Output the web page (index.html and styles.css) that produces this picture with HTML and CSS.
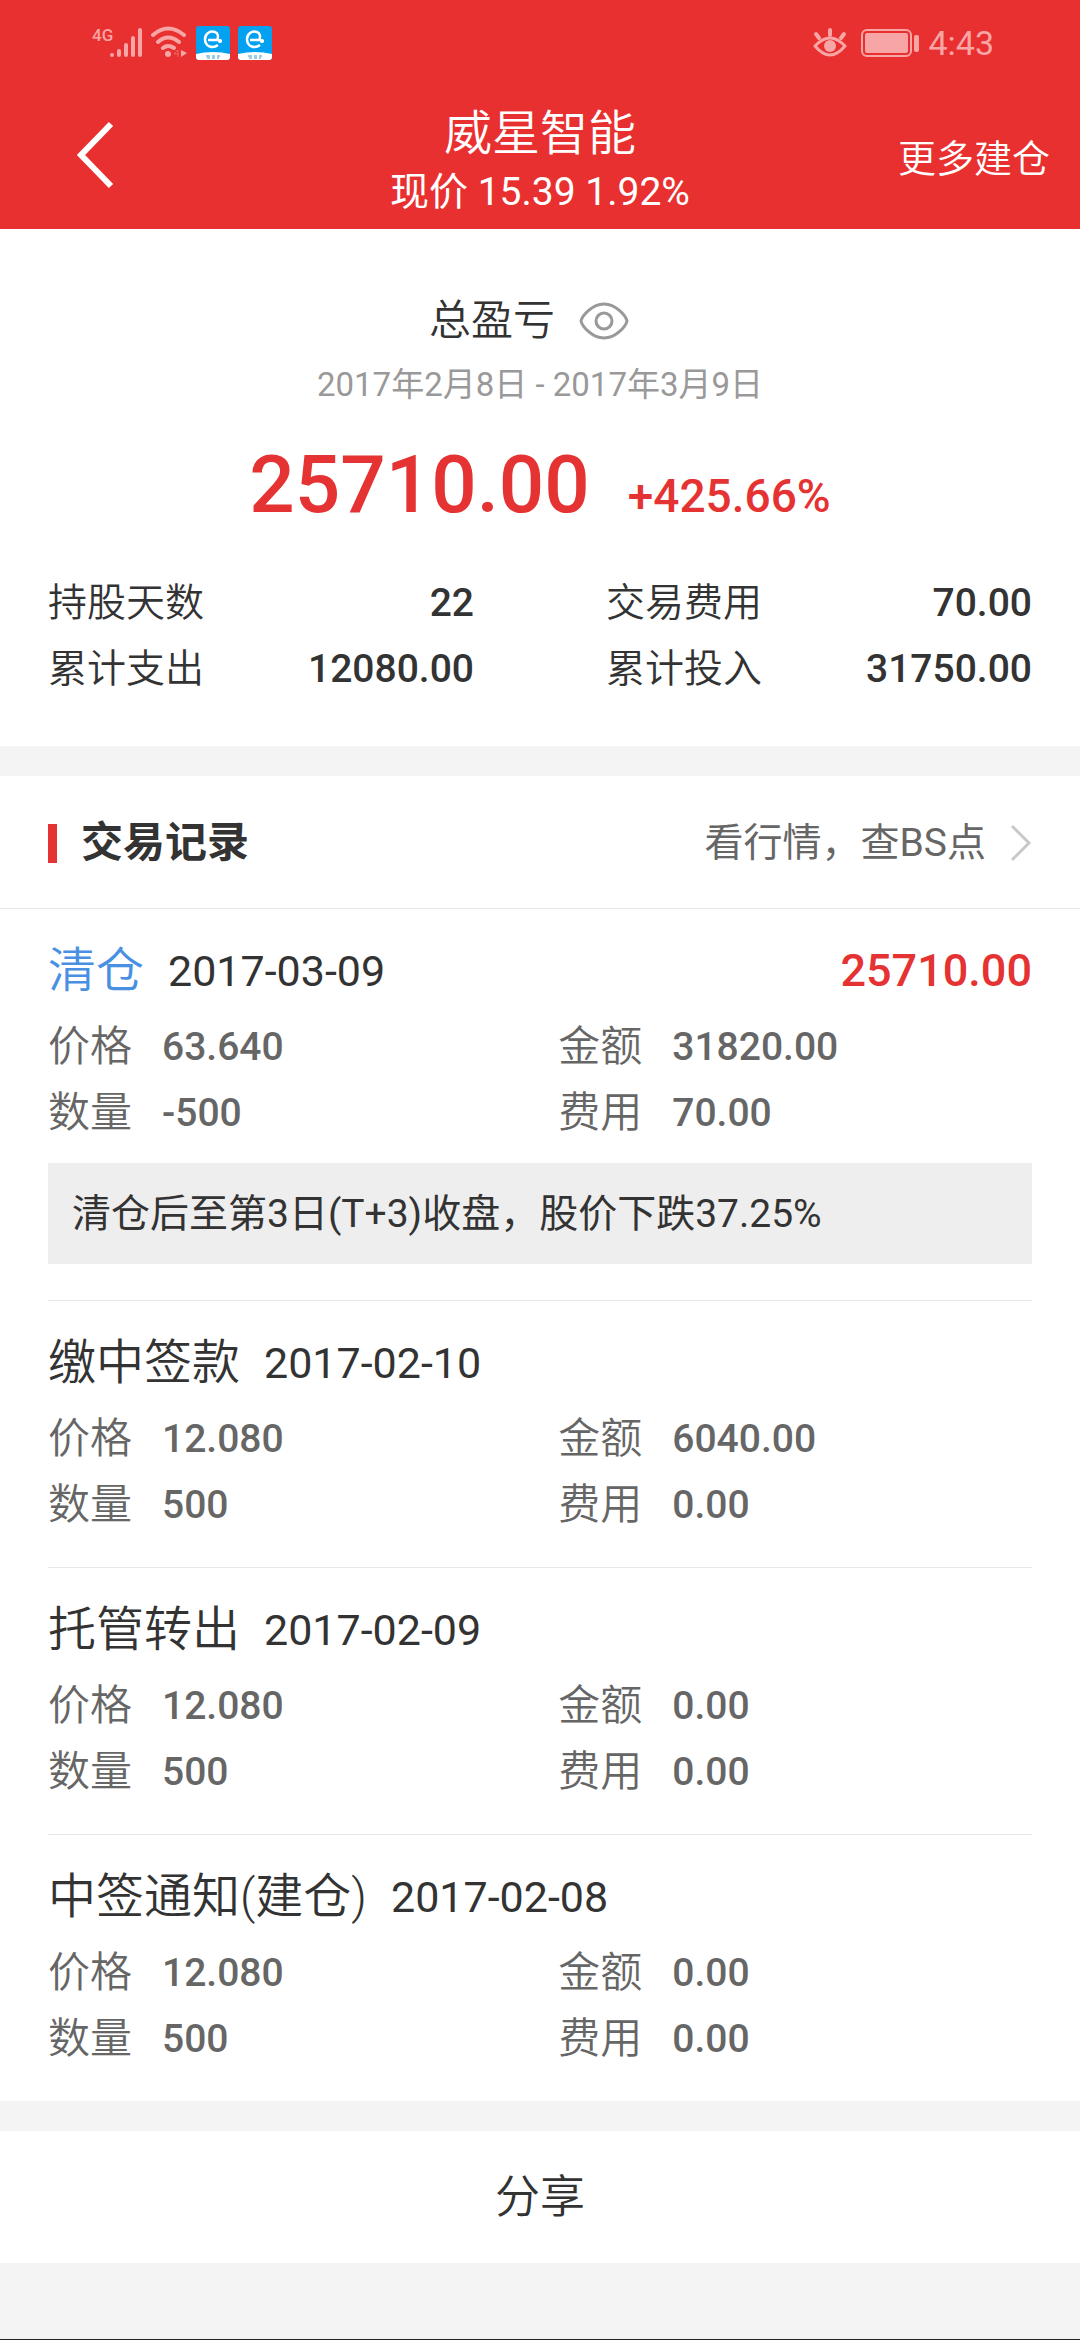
FILE: index.html
```html
<!DOCTYPE html>
<html lang="zh-CN">
<head>
    <meta charset="UTF-8">
    <meta name="viewport" content="width=device-width, initial-scale=1.0">
    <title>威星智能</title>
    <link rel="stylesheet" href="styles.css">
</head>
<body>
    <header class="header">
        <div class="status-bar">
            <div class="status-left">
                <div class="signal">
                    <span class="network">4G</span>
                    <svg viewBox="0 0 32 34" width="32" height="34">
                        <path d="M2 29v0M9 25v4M16 19v10M23 12v17M30 4v25" stroke="currentColor" stroke-width="4" stroke-linecap="round"/>
                    </svg>
                </div>
                <svg viewBox="0 0 38 34" width="38" height="34">
                    <g fill="none" stroke="currentColor" stroke-width="4" stroke-linecap="round">
                        <path d="M3 9Q18 -4 34 9M8 16Q18 7 29 16M13 22Q18 18 24 22"/>
                    </g>
                    <circle cx="18" cy="28" r="3" fill="currentColor"/>
                    <path d="M31 24l6 3-6 4z" fill="currentColor"/>
                    <path d="M28 24v7M28 24l-4 4h5" fill="none" stroke="currentColor" opacity=".4"/>
                </svg>
                <svg viewBox="0 0 34 34" width="34" height="34">
                    <rect width="34" height="34" rx="3" fill="#03a1f0"/>
                    <path d="M0 28q17-4 34 0v3a3 3 0 0 1-3 3H3a3 3 0 0 1-3-3z" fill="#fff"/>
                    <path d="M12 14h9c2-3 1-7-2-8-6-2-10 3-10 7 0 8 8 10 13 6M22 15h4M24 13v4" fill="none" stroke="#fff" stroke-width="2.5"/>
                    <path d="M10 30h4M16 30h3M21 30h3M11 32h3M16 32h3M21 32h2" stroke="#3b9bc4" stroke-width="1"/>
                </svg>
                <svg viewBox="0 0 34 34" width="34" height="34">
                    <rect width="34" height="34" rx="3" fill="#03a1f0"/>
                    <path d="M0 28q17-4 34 0v3a3 3 0 0 1-3 3H3a3 3 0 0 1-3-3z" fill="#fff"/>
                    <path d="M12 14h9c2-3 1-7-2-8-6-2-10 3-10 7 0 8 8 10 13 6M22 15h4M24 13v4" fill="none" stroke="#fff" stroke-width="2.5"/>
                    <path d="M10 30h4M16 30h3M21 30h3M11 32h3M16 32h3M21 32h2" stroke="#3b9bc4" stroke-width="1"/>
                </svg>
            </div>
            <div class="status-right">
                <svg class="icon-eye" viewBox="0 0 34 32" width="34" height="32">
                    <path d="M2 19Q17 3 32 19Q17 37 2 19z" fill="none" stroke="currentColor" stroke-width="3" stroke-linejoin="round"/>
                    <circle cx="17" cy="19" r="6" fill="currentColor"/>
                    <path d="M17 8V3M6 11L3 7M28 11l3-4" stroke="currentColor" stroke-width="4" stroke-linecap="round"/>
                </svg>
                <svg viewBox="0 0 58 28" width="58" height="28">
                    <rect x="1" y="1" width="49" height="26" rx="5" fill="none" stroke="currentColor" stroke-width="2"/>
                    <rect x="4" y="4" width="43" height="20" rx="2" fill="currentColor"/>
                    <rect x="53" y="6" width="5" height="17" rx="2" fill="currentColor"/>
                </svg>
                <span class="clock">4:43</span>
            </div>
        </div>
        <nav class="nav">
            <button class="back" type="button" aria-label="返回">
                <svg viewBox="0 0 40 68" width="40" height="68">
                    <path d="M36 3L6 34l30 31" fill="none" stroke="currentColor" stroke-width="6"/>
                </svg>
            </button>
            <div class="nav-title">
                <h1>威星智能</h1>
                <p>现价 15.39 1.92%</p>
            </div>
            <a class="more" href="#">更多建仓</a>
        </nav>
    </header>

    <main>
        <section class="summary">
            <div class="summary-title">
                <h2>总盈亏</h2>
                <button class="toggle" type="button" aria-label="隐藏金额">
                    <svg viewBox="0 0 50 38" width="50" height="38">
                        <path d="M2 19C3 14 13 2 25 2s22 12 23 17c-1 5-11 17-23 17S3 24 2 19z" fill="none" stroke="currentColor" stroke-width="3"/>
                        <circle cx="25" cy="19" r="8" fill="none" stroke="currentColor" stroke-width="3"/>
                    </svg>
                </button>
            </div>
            <p class="period">2017年2月8日 - 2017年3月9日</p>
            <div class="profit">
                <strong class="profit-total">25710.00</strong>
                <span class="profit-rate">+425.66%</span>
            </div>
            <dl class="stats">
                <div class="stat"><dt>持股天数</dt><dd>22</dd></div>
                <div class="stat"><dt>交易费用</dt><dd>70.00</dd></div>
                <div class="stat"><dt>累计支出</dt><dd>12080.00</dd></div>
                <div class="stat"><dt>累计投入</dt><dd>31750.00</dd></div>
            </dl>
        </section>

        <section class="records">
            <div class="records-header">
                <h2>交易记录</h2>
                <a class="quote-link" href="#">看行情，查BS点
                    <svg viewBox="0 0 22 38" width="22" height="38">
                        <path d="M2 2l17 17L2 36" fill="none" stroke="#c8c8c8" stroke-width="3"/>
                    </svg>
                </a>
            </div>

            <article class="record">
                <div class="record-title">
                    <h3 class="sell">清仓</h3>
                    <time>2017-03-09</time>
                    <strong class="record-profit">25710.00</strong>
                </div>
                <dl class="details">
                    <div><dt>价格</dt><dd>63.640</dd></div>
                    <div><dt>金额</dt><dd>31820.00</dd></div>
                    <div><dt>数量</dt><dd>-500</dd></div>
                    <div><dt>费用</dt><dd>70.00</dd></div>
                </dl>
                <p class="note">清仓后至第3日(T+3)收盘，股价下跌37.25%</p>
            </article>

            <article class="record">
                <div class="record-title">
                    <h3>缴中签款</h3>
                    <time>2017-02-10</time>
                </div>
                <dl class="details">
                    <div><dt>价格</dt><dd>12.080</dd></div>
                    <div><dt>金额</dt><dd>6040.00</dd></div>
                    <div><dt>数量</dt><dd>500</dd></div>
                    <div><dt>费用</dt><dd>0.00</dd></div>
                </dl>
            </article>

            <article class="record">
                <div class="record-title">
                    <h3>托管转出</h3>
                    <time>2017-02-09</time>
                </div>
                <dl class="details">
                    <div><dt>价格</dt><dd>12.080</dd></div>
                    <div><dt>金额</dt><dd>0.00</dd></div>
                    <div><dt>数量</dt><dd>500</dd></div>
                    <div><dt>费用</dt><dd>0.00</dd></div>
                </dl>
            </article>

            <article class="record">
                <div class="record-title">
                    <h3>中签通知(建仓)</h3>
                    <time>2017-02-08</time>
                </div>
                <dl class="details">
                    <div><dt>价格</dt><dd>12.080</dd></div>
                    <div><dt>金额</dt><dd>0.00</dd></div>
                    <div><dt>数量</dt><dd>500</dd></div>
                    <div><dt>费用</dt><dd>0.00</dd></div>
                </dl>
            </article>
        </section>

        <button class="share" type="button">分享</button>
    </main>
</body>
</html>
```

FILE: styles.css
```css
* {
    box-sizing: border-box;
    margin: 0;
    padding: 0;
}
body {
    display: flex;
    flex-direction: column;
    min-height: 100vh;
    background: #f4f4f4;
    border-bottom: 1px solid #222;
    color: #333;
    font-family: Roboto, "Noto Sans CJK SC", sans-serif;
    font-size: 39px;
    line-height: 66px;
}
button {
    background: none;
    border: none;
    font: inherit;
    color: inherit;
    cursor: pointer;
}
a {
    color: inherit;
    text-decoration: none;
}
svg {
    display: block;
    flex: none;
}
h1, h2, h3, dt {
    font-weight: 350;
}

/* Header */
.header {
    background: #e93030;
    color: #fff;
}
.status-bar {
    display: flex;
    justify-content: space-between;
    align-items: center;
    height: 86px;
    padding: 0 86px 0 92px;
    color: #f8a5a5;
}
.status-left {
    display: flex;
    gap: 8px;
}
.status-right {
    display: flex;
    align-items: center;
    gap: 9px;
}
.icon-eye {
    margin-right: 5px;
}
.signal {
    display: flex;
    width: 50px;
    height: 34px;
    justify-content: space-between;
}
/* sits over the shorter bars */
.network {
    width: 18px;
    font-size: 17px;
    font-weight: 500;
    line-height: 18px;
}
.clock {
    font-size: 34px;
    line-height: 40px;
}
.nav {
    display: grid;
    grid-template-columns: 1fr auto 1fr;
    align-items: center;
    min-height: 143px;
    padding: 18px 30px 9px;
}
.back {
    justify-self: start;
    padding: 0 45px 15px;
}
.nav-title {
    text-align: center;
}
.nav-title h1 {
    font-size: 48px;
    line-height: 60px;
}
.nav-title p {
    line-height: 56px;
}
.more {
    justify-self: end;
    padding-bottom: 6px;
    font-size: 38px;
    font-weight: 350;
}

/* Summary */
.summary {
    background: #fff;
    padding: 61px 48px 44px;
    margin-bottom: 30px;
}
.summary-title {
    display: flex;
    justify-content: center;
    align-items: center;
    gap: 24px;
    padding-right: 22px;
}
.summary-title h2 {
    font-size: 42px;
    line-height: 62px;
}
.toggle {
    color: #999;
}
.period {
    color: #999;
    font-size: 33px;
    text-align: center;
}
.profit {
    display: flex;
    justify-content: center;
    align-items: baseline;
    gap: 38px;
    margin-bottom: 6px;
    color: #e53333;
    font-weight: 500;
    line-height: 135px;
}
.profit-total {
    font-size: 80px;
    font-weight: 500;
}
.profit-rate {
    font-size: 46px;
}
.stats {
    display: grid;
    grid-template-columns: 1fr 1fr;
    column-gap: 132px;
}
.stat {
    display: flex;
    justify-content: space-between;
}
.stat dd {
    font-weight: 500;
}

/* Records */
.records {
    background: #fff;
    margin-bottom: 30px;
}
.records-header {
    display: flex;
    justify-content: space-between;
    align-items: center;
    padding: 34px 48px 32px;
    border-bottom: 1px solid #e8e8e8;
}
.records-header h2 {
    display: flex;
    align-items: center;
    gap: 24px;
    font-size: 42px;
    font-weight: 700;
}
.records-header h2::before {
    content: "";
    width: 9px;
    height: 39px;
    background: #e53333;
}
.quote-link {
    display: flex;
    align-items: center;
    gap: 24px;
    color: #666;
}
.record {
    margin: 0 48px;
    padding: 29px 0;
}
.record + .record {
    border-top: 1px solid #e8e8e8;
}
.record-title {
    display: flex;
    align-items: center;
    margin-bottom: 10px;
}
.record-title h3 {
    margin-right: 24px;
    font-size: 48px;
}
.record-title .sell {
    color: #4a90e2;
}
.record-title time {
    font-size: 43px;
}
.record-profit {
    margin-left: auto;
    color: #e53333;
    font-size: 45px;
    font-weight: 500;
}
.details {
    display: grid;
    grid-template-columns: 14fr 13fr;
    color: #666;
}
.details div {
    display: flex;
    gap: 30px;
}
.details dt {
    font-size: 42px;
}
.details dd {
    font-weight: 500;
}
.note {
    margin: 17px 0 7px;
    padding: 18px 24px 17px;
    background: #eee;
}

/* Share */
.share {
    display: block;
    width: 100%;
    padding: 34px 33px 32px;
    background: #fff;
    font-size: 45px;
    font-weight: 350;
}
```
